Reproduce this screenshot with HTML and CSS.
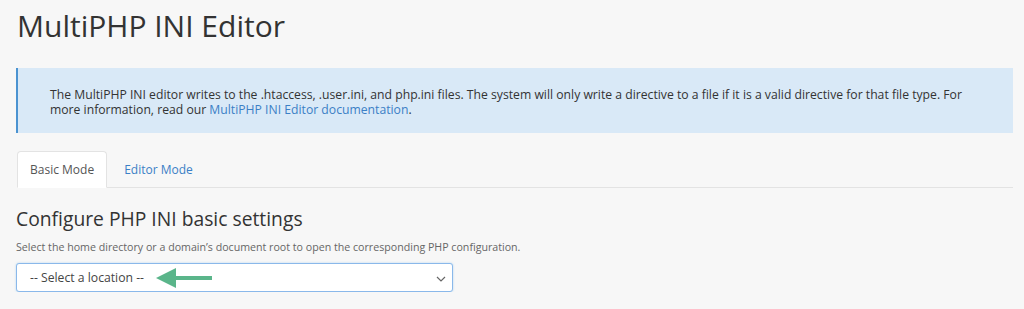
FILE: index.html
```html
<!DOCTYPE html>
<html lang="en">
<head>
    <meta charset="UTF-8">
    <title>MultiPHP INI Editor</title>
    <link rel="stylesheet" href="styles.css">
</head>
<body>
    <div class="page">
        <h1>MultiPHP INI Editor</h1>

        <div class="alert">
            The MultiPHP INI editor writes to the .htaccess, .user.ini, and php.ini files. The system will only write a directive to a file if it is a valid directive for that file type. For more information, read our <a href="#">MultiPHP INI Editor documentation</a>.
        </div>

        <ul class="tabs">
            <li class="tab active">Basic Mode</li>
            <li class="tab"><a href="#">Editor Mode</a></li>
        </ul>

        <h2>Configure PHP INI basic settings</h2>
        <p class="hint">Select the home directory or a domain’s document root to open the corresponding PHP configuration.</p>

        <div class="select-wrap">
            <div class="select">
                <span class="select-text">-- Select a location --</span>
                <svg class="pointer" width="58" height="22" viewBox="0 0 58 22">
                    <polygon points="0,11 20,1 20,21" fill="#5ab58a"/>
                    <rect x="18" y="9" width="38" height="4" fill="#5ab58a"/>
                </svg>
                <svg class="caret" width="10" height="6" viewBox="0 0 10 6">
                    <path d="M1 1 L5 5 L9 1" fill="none" stroke="#666" stroke-width="1.2"/>
                </svg>
            </div>
        </div>
    </div>
</body>
</html>
```

FILE: styles.css
```css
* { margin: 0; padding: 0; box-sizing: border-box; }
body {
    font-family: 'Open Sans', sans-serif;
    background: #f7f7f7;
    color: #333;
}
.page { padding: 8px 11px 0 16px; }
h1 {
    font-size: 30px;
    font-weight: 400;
    color: #333;
    line-height: 36px;
    margin-left: 1px;
    margin-bottom: 24px;
}
.alert {
    background: #d9e9f7;
    border-left: 2px solid #4b93d1;
    padding: 19px 42px 16px 32px;
    font-size: 12.2px;
    line-height: 15px;
    color: #333;
    margin-bottom: 18px;
}
.alert a { color: #3b80c6; text-decoration: none; }
.tabs {
    list-style: none;
    display: flex;
    border-bottom: 1px solid #e3e3e3;
    margin-left: 1px;
}
.tab {
    font-size: 12px;
    padding: 9px 12px;
    line-height: 17px;
    margin-bottom: -1px;
    border: 1px solid transparent;
    border-radius: 4px 4px 0 0;
    margin-right: 4px;
}
.tab.active {
    background: #fff;
    border-color: #e3e3e3 #e3e3e3 #fff;
    color: #555;
}
.tab a { color: #3b80c6; text-decoration: none; }
h2 {
    font-size: 19.3px;
    font-weight: 400;
    color: #333;
    margin-top: 18px;
    line-height: 26px;
}
.hint {
    font-size: 10.65px;
    color: #666;
    margin-top: 8px;
    line-height: 14px;
}
.select-wrap { margin-top: 9px; }
.select {
    position: relative;
    display: flex;
    align-items: center;
    width: 437px;
    height: 29px;
    background: #fff;
    border: 1px solid #8ab8ea;
    border-radius: 3px;
    box-shadow: 0 0 2px rgba(102, 175, 233, 0.5);
    padding-left: 13px;
}
.select-text { font-size: 12.2px; color: #444; }
.pointer { position: absolute; left: 139px; top: 3px; }
.caret { position: absolute; right: 6px; top: 12px; }
```
